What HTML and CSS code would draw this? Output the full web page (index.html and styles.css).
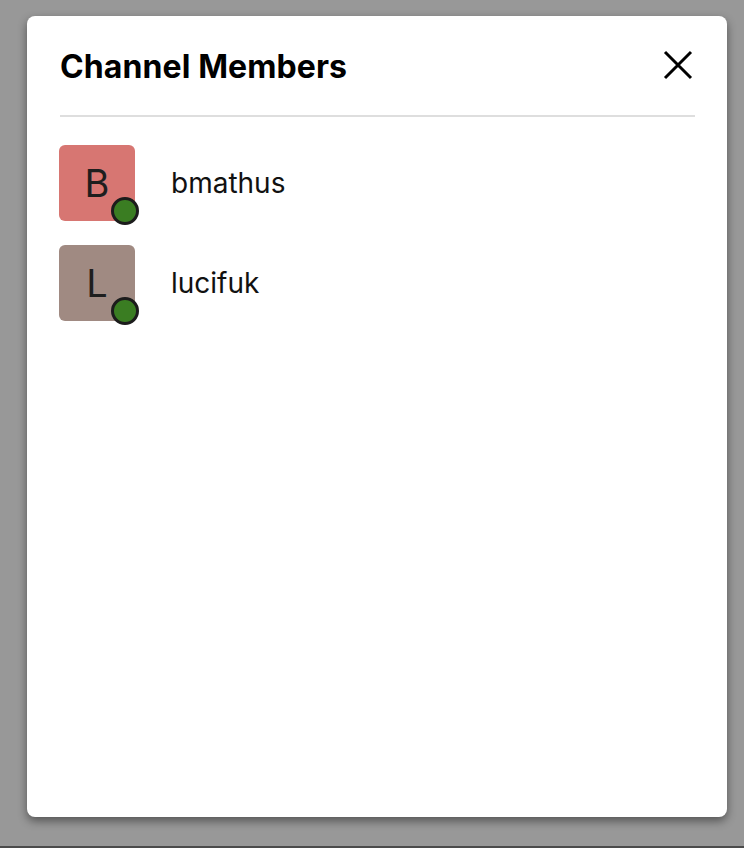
FILE: index.html
```html
<!DOCTYPE html>
<html>
<head>
<meta charset="utf-8">
<link rel="stylesheet" href="styles.css">
</head>
<body>
<div class="page">
  <div class="modal">
    <div class="header">
      <h2 class="title">Channel Members</h2>
      <button class="close" aria-label="Close">
        <svg width="32" height="32" viewBox="0 0 32 32"><path d="M3 3 L29 29 M29 3 L3 29" stroke="#000" stroke-width="3" fill="none"/></svg>
      </button>
    </div>
    <div class="divider"></div>
    <ul class="members">
      <li class="member">
        <div class="avatar red">B<span class="status"></span></div>
        <span class="name">bmathus</span>
      </li>
      <li class="member">
        <div class="avatar taupe">L<span class="status"></span></div>
        <span class="name">lucifuk</span>
      </li>
    </ul>
  </div>
  <div class="footer-bar"></div>
</div>
</body>
</html>
```
FILE: styles.css
```css
html, body { margin: 0; padding: 0; }
body {
  background: #989898;
  font-family: Inter, "Noto Sans", sans-serif;
  color: #111;
}
.page {
  height: 848px;
  display: flex;
  flex-direction: column;
  padding: 16px 17px 0 27px;
  box-sizing: border-box;
}
.modal {
  height: 801px;
  background: #fff;
  border-radius: 8px;
  box-shadow: 0 4px 10px rgba(0,0,0,0.45);
  padding: 31px 32px 0 33px;
  box-sizing: border-box;
}
.header {
  display: flex;
  align-items: center;
  justify-content: space-between;
}
.title {
  margin: 0;
  font-size: 32px;
  font-weight: 700;
  letter-spacing: 0.1px;
  line-height: 39px;
  color: #000;
}
.close {
  border: 0;
  background: none;
  padding: 0;
  width: 32px;
  height: 32px;
  margin-right: 1px;
  margin-top: -3px;
  display: flex;
}
.divider {
  height: 2px;
  background: #dedede;
  margin-top: 29px;
}
.members {
  list-style: none;
  margin: 28px 0 0;
  padding: 0;
  display: flex;
  flex-direction: column;
  gap: 24px;
}
.member {
  display: flex;
  align-items: center;
  gap: 36px;
}
.avatar {
  position: relative;
  width: 76px;
  height: 76px;
  border-radius: 6px;
  display: flex;
  align-items: center;
  justify-content: center;
  font-size: 38px;
  color: #1e1e1e;
  margin-left: -1px;
}
.red { background: #d77672; }
.taupe { background: #a08a82; }
.status {
  position: absolute;
  right: -4px;
  bottom: -4px;
  width: 22px;
  height: 22px;
  border: 3px solid #1c1c1c;
  border-radius: 50%;
  background: #3a7d22;
}
.name {
  font-size: 28px;
  color: #111;
}
.footer-bar {
  margin-top: auto;
  height: 2px;
  background: #4b4b4b;
  margin-left: -27px;
  margin-right: -17px;
}
```
